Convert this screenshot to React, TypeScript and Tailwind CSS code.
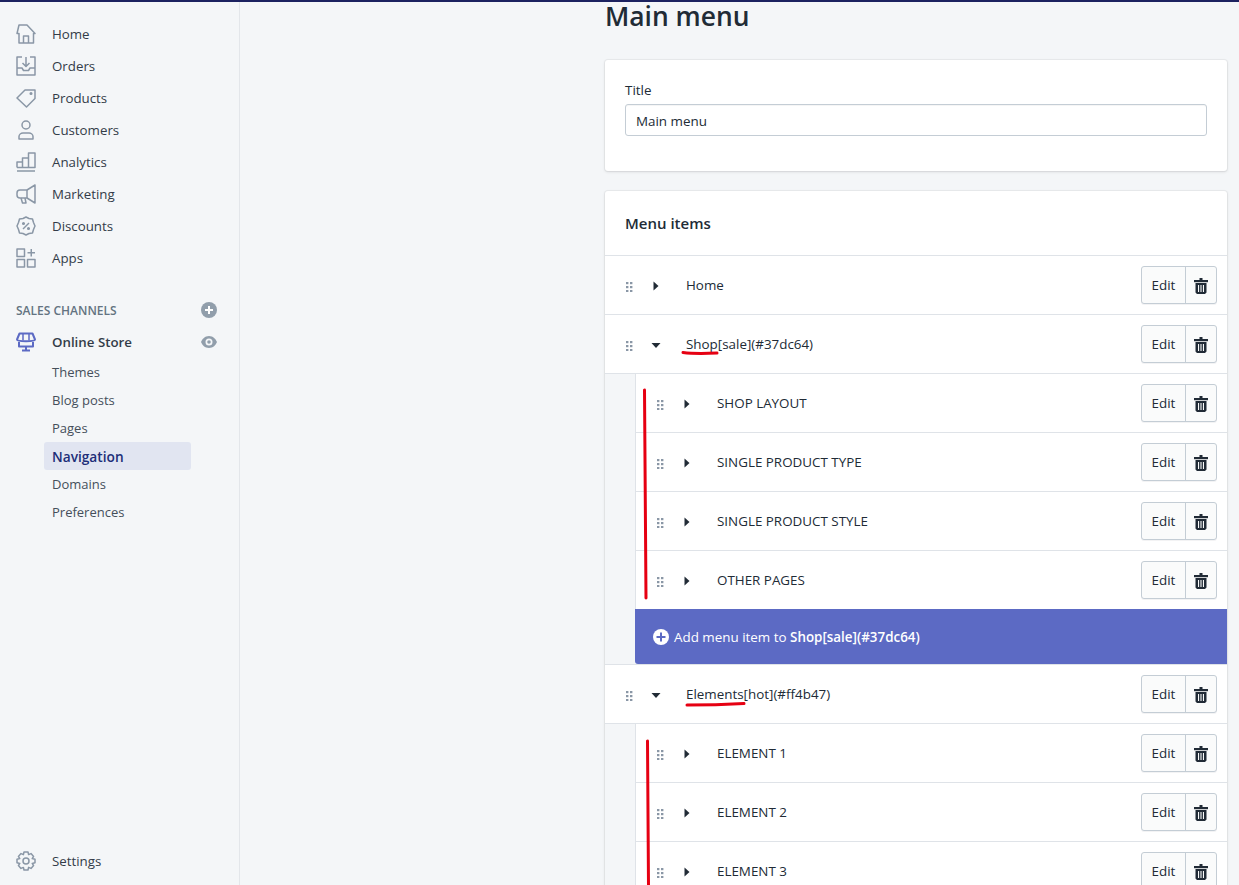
import type { ReactNode } from "react";

const Icon = ({ children }: { children: ReactNode }) => (
  <svg viewBox="0 0 20 20" className="w-5 h-5 shrink-0" fill="none" stroke="#8a97a6" strokeWidth="1.5" strokeLinejoin="round">
    {children}
  </svg>
);

const navItems: { label: string; icon: ReactNode }[] = [
  {
    label: "Home",
    icon: (
      <>
        <path d="M3 19V9.5H1L3 1H11L19 9.5H17.5V19H3Z" />
        <path d="M7.5 19V12H12.5V19" />
      </>
    ),
  },
  {
    label: "Orders",
    icon: (
      <>
        <path d="M6 1H1V19H19V1H14" />
        <path d="M1 12H6L7.5 14.5H12.5L14 12H19" />
        <path d="M10 1V10M6.5 7L10 10.5L13.5 7" />
      </>
    ),
  },
  {
    label: "Products",
    icon: (
      <>
        <path d="M1 10L9 2H19V10.5L10.5 19L1 10Z" />
        <circle cx="15" cy="5.5" r="0.8" />
      </>
    ),
  },
  {
    label: "Customers",
    icon: (
      <>
        <circle cx="10" cy="5" r="4" />
        <path d="M3 19V16.5C3 14.5 5 13 7 13H13C15 13 17 14.5 17 16.5V19H3Z" />
      </>
    ),
  },
  {
    label: "Analytics",
    icon: (
      <>
        <path d="M1 19H19" />
        <path d="M1 15.5V10H6.5V15.5M6.5 15.5V6H12.5V15.5M12.5 15.5V1H19V15.5H1" />
      </>
    ),
  },
  {
    label: "Marketing",
    icon: (
      <>
        <path d="M19 1V19L11 14H4C2 14 1 12.5 1 11V9C1 7 2.5 6 4 6H11L19 1Z" />
        <path d="M11 6V14M5 14L6.5 19H10L9 14" />
      </>
    ),
  },
  {
    label: "Discounts",
    icon: (
      <>
        <path d="M10 1L13 2.5L16.5 3L17.5 6.5L19 10L17.5 13.5L16.5 17L13 17.5L10 19L7 17.5L3.5 17L2.5 13.5L1 10L2.5 6.5L3.5 3L7 2.5L10 1Z" />
        <path d="M13 7L7 13" />
        <circle cx="7.5" cy="7.5" r="0.8" />
        <circle cx="12.5" cy="12.5" r="0.8" />
      </>
    ),
  },
  {
    label: "Apps",
    icon: (
      <>
        <rect x="1" y="1" width="7.5" height="7.5" />
        <rect x="1" y="11.5" width="7.5" height="7.5" />
        <rect x="11.5" y="11.5" width="7.5" height="7.5" />
        <path d="M15.25 1V8.5M11.5 4.75H19" />
      </>
    ),
  },
];

const subItems = ["Themes", "Blog posts", "Pages", "Navigation", "Domains", "Preferences"];

const NavRow = ({ label, icon }: { label: string; icon: ReactNode }) => (
  <div className="flex items-center h-8 pl-4 gap-4 text-[13.3px] font-medium text-[#333c48]">
    {icon}
    <span className="pt-[2px]">{label}</span>
  </div>
);

const Sidebar = () => (
  <aside className="w-[240px] shrink-0 flex flex-col pt-4 pb-2 border-r border-[#e3e6ea]">
    {navItems.map((item) => (
      <NavRow key={item.label} label={item.label} icon={<Icon>{item.icon}</Icon>} />
    ))}
    <div className="flex items-center justify-between h-8 mt-5 pl-4 pr-[22px] text-[12px] font-semibold text-[#637381]">
      <span className="pt-px">SALES CHANNELS</span>
      <svg viewBox="0 0 16 16" className="w-4 h-4">
        <circle cx="8" cy="8" r="8" fill="#919eab" />
        <path d="M8 4V12M4 8H12" stroke="#fff" strokeWidth="2" />
      </svg>
    </div>
    <div className="flex items-center h-8 pl-4 pr-[22px] gap-4 text-[13.3px] font-semibold text-[#333c48]">
      <svg viewBox="0 0 20 20" className="w-5 h-5 shrink-0" fill="none" stroke="#5c6ac4" strokeWidth="2" strokeLinejoin="round">
        <path d="M3.5 1.5H16.5L19 7.5C19 9.8 1 9.8 1 7.5L3.5 1.5Z" />
        <path d="M7 2V8.5M13 2V8.5" strokeWidth="1.5" />
        <path d="M3 10V14.5H17V10M10 14.5V18.5M6 18.5H14" />
      </svg>
      <span className="flex-1 pt-[2px]">Online Store</span>
      <svg viewBox="0 0 16 12" className="w-4 h-3" fill="#919eab">
        <path d="M8 0C4 0 1.2 3 0 6C1.2 9 4 12 8 12C12 12 14.8 9 16 6C14.8 3 12 0 8 0ZM8 9.5A3.5 3.5 0 1 1 8 2.5A3.5 3.5 0 0 1 8 9.5ZM8 4.2A1.8 1.8 0 1 0 8 7.8A1.8 1.8 0 0 0 8 4.2Z" />
      </svg>
    </div>
    {subItems.map((item) =>
      item === "Navigation" ? (
        <div key={item} className="flex items-center h-7 ml-11 w-[147px] pl-2 pt-[2px] rounded-[3px] bg-[#e1e5f1] text-[13.7px] font-semibold text-[#202e78]">
          {item}
        </div>
      ) : (
        <div key={item} className="flex items-center h-7 ml-11 w-[147px] pl-2 pt-[2px] text-[13px] text-[#454f5b]">
          {item}
        </div>
      )
    )}
    <div className="mt-auto">
      <NavRow
        label="Settings"
        icon={
          <Icon>
            <path d="M8 1H12L12.6 3.6L15 2.6L17.6 5.4L16.2 7.6L19 8.2V11.8L16.2 12.4L17.6 14.6L15 17.4L12.6 16.4L12 19H8L7.4 16.4L5 17.4L2.4 14.6L3.8 12.4L1 11.8V8.2L3.8 7.6L2.4 5.4L5 2.6L7.4 3.6L8 1Z" />
            <circle cx="10" cy="10" r="3" />
          </Icon>
        }
      />
    </div>
  </aside>
);

const DragHandle = () => (
  <svg viewBox="0 0 8 10" className="w-2 h-[10px] shrink-0 mt-[3px]" fill="#8a97a6">
    <rect x="1" y="0" width="2.4" height="2.2" />
    <rect x="5" y="0" width="2.4" height="2.2" />
    <rect x="1" y="4" width="2.4" height="2.2" />
    <rect x="5" y="4" width="2.4" height="2.2" />
    <rect x="1" y="8" width="2.4" height="2.2" />
    <rect x="5" y="8" width="2.4" height="2.2" />
  </svg>
);

const Caret = ({ open }: { open?: boolean }) => (
  <svg viewBox="0 0 10 10" className="w-2.5 h-2.5 shrink-0 -mx-px mt-px" fill="#212b36">
    {open ? <path d="M0.5 3H9.5L5 8Z" /> : <path d="M2.5 0.5L7.5 5L2.5 9.5Z" />}
  </svg>
);

const ActionButtons = () => (
  <div className="ml-auto flex h-[38px] rounded-[3px] border border-[#c4cdd5] bg-[#fafbfb] shadow-[0_1px_0_rgba(22,29,37,0.05)]">
    <div className="flex items-center justify-center w-[44px] border-r border-[#c4cdd5] text-[13.4px] text-[#212b36]">Edit</div>
    <div className="flex items-center justify-center w-[30px]">
      <svg viewBox="0 0 14 16" className="w-[14px] h-4 mt-px" fill="#212b36">
        <rect x="5.5" y="0" width="3" height="2.5" />
        <rect x="0" y="2" width="14" height="2.2" />
        <path d="M1.5 5H12.5V14.5L11 16H3L1.5 14.5V5ZM4 7V14H5.1V7H4ZM6.45 7V14H7.55V7H6.45ZM8.9 7V14H10V7H8.9Z" fillRule="evenodd" />
      </svg>
    </div>
  </div>
);

const Row = ({ label, open, last }: { label: string; open?: boolean; last?: boolean }) => (
  <div className={last ? "flex items-center h-[58px] pl-5 pr-[10px]" : "flex items-center h-[59px] pl-5 pr-[10px] border-b border-[#dfe3e8]"}>
    <DragHandle />
    <span className="ml-[19px] flex"><Caret open={open} /></span>
    <span className="ml-[26px] text-[13.4px] text-[#212b36]">{label}</span>
    <ActionButtons />
  </div>
);

const Nested = ({ children }: { children: ReactNode }) => (
  <div className="bg-[#f4f6f8] pl-[30px]">
    <div className="bg-white border-l border-[#dfe3e8]">{children}</div>
  </div>
);

const Main = () => (
  <main className="flex-1 pl-[365px] pr-3">
    <h1 className="text-[26.4px] leading-[28px] font-semibold text-[#212b36]">Main menu</h1>
    <section className="mt-[30px] h-[111px] bg-white rounded-[3px] px-5 pt-[20px] shadow-[0_0_0_1px_rgba(63,63,68,0.05),0_1px_3px_0_rgba(63,63,68,0.15)]">
      <label className="block text-[13.4px] leading-[20px] text-[#212b36]">Title</label>
      <div className="mt-[4px] h-[32px] flex items-center px-[10px] pt-[2px] rounded-[3px] border border-[#c4cdd5] text-[13.4px] text-[#212b36] shadow-[inset_0_1px_0_rgba(63,63,68,0.05)]">
        Main menu
      </div>
    </section>
    <section className="mt-5 bg-white rounded-t-[3px] shadow-[0_0_0_1px_rgba(63,63,68,0.05),0_1px_3px_0_rgba(63,63,68,0.15)]">
      <div className="flex items-center h-[65px] px-5 border-b border-[#dfe3e8] text-[15px] font-semibold text-[#212b36]">Menu items</div>
      <Row label="Home" />
      <Row label="Shop[sale](#37dc64)" open />
      <Nested>
        <Row label="SHOP LAYOUT" />
        <Row label="SINGLE PRODUCT TYPE" />
        <Row label="SINGLE PRODUCT STYLE" />
        <Row label="OTHER PAGES" last />
      </Nested>
      <div className="bg-[#f4f6f8] pl-[30px] border-b border-[#dfe3e8]">
        <div className="flex items-center gap-[5px] h-[55px] pl-[18px] bg-[#5c6ac4] rounded-bl-[3px] text-[13.4px] text-white">
          <svg viewBox="0 0 16 16" className="w-4 h-4 shrink-0">
            <circle cx="8" cy="8" r="8" fill="#fff" />
            <path d="M8 3.5V12.5M3.5 8H12.5" stroke="#5c6ac4" strokeWidth="2" />
          </svg>
          <span className="pt-[2px]">
            Add menu item to <strong className="font-semibold">Shop[sale](#37dc64)</strong>
          </span>
        </div>
      </div>
      <Row label="Elements[hot](#ff4b47)" open />
      <Nested>
        <Row label="ELEMENT 1" />
        <Row label="ELEMENT 2" />
        <Row label="ELEMENT 3" />
      </Nested>
    </section>
  </main>
);

const App = () => {
  return (
    <div className="relative h-[885px] overflow-hidden bg-[#f4f6f8] font-['Open_Sans','Noto_Sans',sans-serif]">
      <div className="h-[2px] bg-[#1c2260]" />
      <div className="flex h-[883px]">
        <Sidebar />
        <Main />
      </div>
      {/* red marker annotations drawn over the screenshot */}
      <svg className="absolute inset-0 w-full h-full pointer-events-none" fill="none" stroke="#e60012" strokeWidth="3" strokeLinecap="round">
        <path d="M644.5 390L646 598" />
        <path d="M683 352.5C695 354 706 353.5 717 353" />
        <path d="M687 705C705 705 725 704.5 744 703.5" />
        <path d="M647.5 741L648.5 885" />
      </svg>
    </div>
  );
};

export default App;
